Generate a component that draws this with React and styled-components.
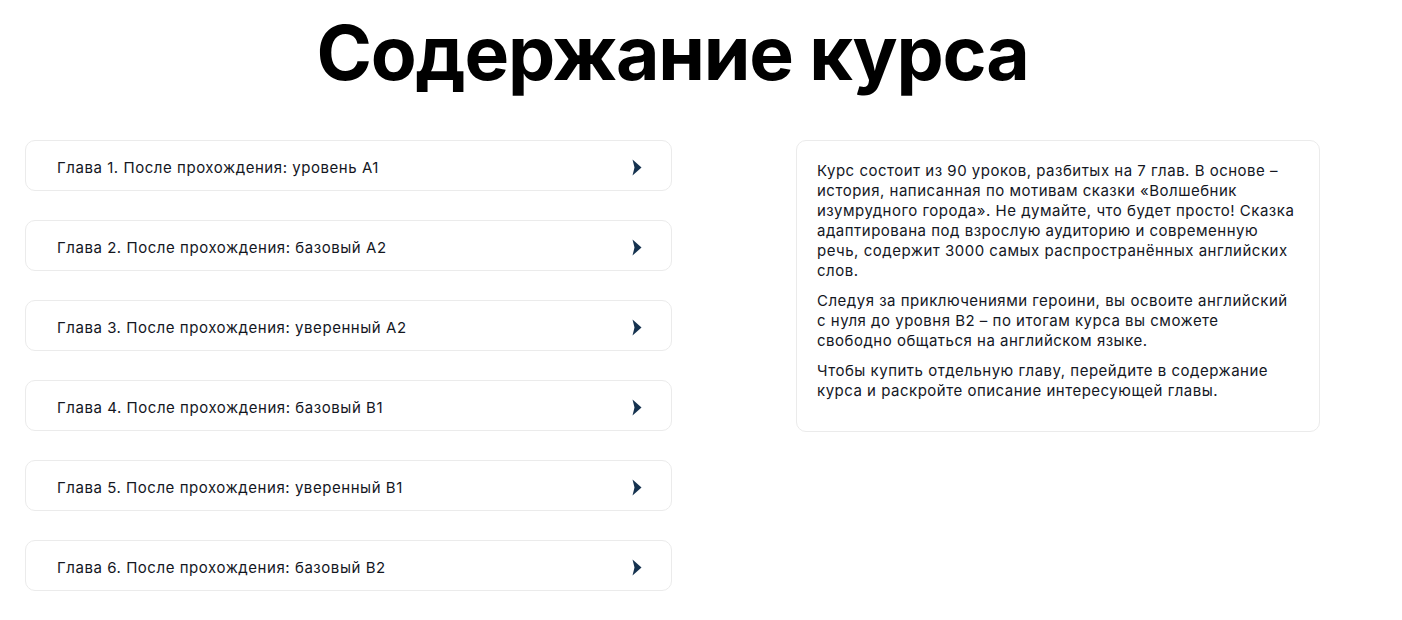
import React from 'react'
import styled, { createGlobalStyle } from 'styled-components'

const GlobalStyle = createGlobalStyle`
  body {
    margin: 0;
    background: #fff;
    font-family: Inter, "Noto Sans", sans-serif;
    color: #111;
  }
`

const Page = styled.div`
  width: 1295px;
  margin-left: 25px;
`

const Title = styled.h1`
  margin: 0;
  padding-top: 8px;
  font-family: Inter, "Liberation Sans", sans-serif;
  font-size: 75px;
  font-weight: 700;
  line-height: 90px;
  letter-spacing: -1.2px;
  text-align: center;
  color: #000;
`

const Columns = styled.div`
  display: grid;
  grid-template-columns: 647px 524px;
  column-gap: 124px;
  margin-top: 42px;
  align-items: start;
`

const ChapterList = styled.div`
  display: flex;
  flex-direction: column;
  gap: 29px;
`

const Chapter = styled.div`
  display: flex;
  align-items: center;
  justify-content: space-between;
  height: 51px;
  box-sizing: border-box;
  padding: 3px 29px 0 31px;
  border: 1px solid #ebebeb;
  border-radius: 10px;
  font-size: 15px;
  letter-spacing: 0.55px;
  color: #14171f;
  cursor: pointer;
`

const Arrow = () => (
  <svg width="10" height="17" viewBox="0 0 10 17">
    <path d="M0.5 0.5 L9.5 8.5 L0.5 16.5 L2.5 8.5 Z" fill="#15324f" />
  </svg>
)

const InfoCard = styled.div`
  border: 1px solid #ebebeb;
  border-radius: 10px;
  padding: 20px 23px 20px 20px;

  p {
    margin: 0 0 10px;
    font-size: 15px;
    line-height: 20px;
    letter-spacing: 0.5px;
    color: #14171f;
  }
`

const chapters = [
  'Глава 1. После прохождения: уровень A1',
  'Глава 2. После прохождения: базовый A2',
  'Глава 3. После прохождения: уверенный A2',
  'Глава 4. После прохождения: базовый B1',
  'Глава 5. После прохождения: уверенный B1',
  'Глава 6. После прохождения: базовый B2',
]

export default function App() {
  return (
    <Page>
      <GlobalStyle />
      <Title>Содержание курса</Title>
      <Columns>
        <ChapterList>
          {chapters.map(c => (
            <Chapter key={c}>
              <span>{c}</span>
              <Arrow />
            </Chapter>
          ))}
        </ChapterList>
        <InfoCard>
          <p>
            Курс состоит из 90 уроков, разбитых на 7 глав. В основе – история, написанная по мотивам
            сказки «Волшебник изумрудного города». Не думайте, что будет просто! Сказка адаптирована
            под взрослую аудиторию и современную речь, содержит 3000 самых распространённых
            английских слов.
          </p>
          <p>
            Следуя за приключениями героини, вы освоите английский с нуля до уровня B2 – по итогам
            курса вы сможете свободно общаться на английском языке.
          </p>
          <p>
            Чтобы купить отдельную главу, перейдите в содержание курса и раскройте описание
            интересующей главы.
          </p>
        </InfoCard>
      </Columns>
    </Page>
  )
}
